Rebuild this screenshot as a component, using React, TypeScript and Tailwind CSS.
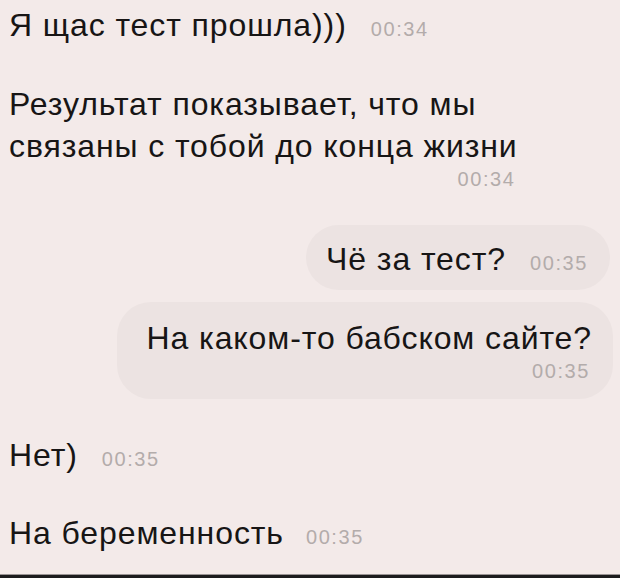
import React from "react";

const font = { fontFamily: '"Liberation Sans", Arial, sans-serif' };

function Time({ t, className = "" }: { t: string; className?: string }) {
  return (
    <span className={"text-[20px] leading-[24px] tracking-[1.6px] text-[#b3acab] " + className}>{t}</span>
  );
}

const big = "text-[32px] leading-[42px] tracking-[0.9px]";

export default function App() {
  return (
    <div style={font} className="w-[620px] h-[578px] bg-[#f3eae9] flex flex-col overflow-hidden text-[#171515]">
      <div className="flex-1 flex flex-col pl-[9px] pt-[4px]">
        <div className="flex items-baseline">
          <span className={big}>Я щас тест прошла)))</span>
          <Time t="00:34" className="ml-[24px]" />
        </div>

        <div className="mt-[37px] self-start flex flex-col">
          <div className={big}>
            Результат показывает, что мы
            <br />
            связаны с тобой до конца жизни
          </div>
          <div className="flex justify-end pr-[2px]">
            <Time t="00:34" />
          </div>
        </div>

        <div className="mt-[34px] self-end mr-[10px] flex items-baseline rounded-[34px] bg-[#ece3e2] pl-[20px] pr-[22px] pt-[13px] pb-[10px]">
          <span className={big}>Чё за тест?</span>
          <Time t="00:35" className="ml-[24px]" />
        </div>

        <div className="mt-[12px] self-end mr-[7px] flex flex-col rounded-[34px] bg-[#ece3e2] pl-[30px] pr-[21px] pt-[15px] pb-[16px]">
          <span className={big}>На каком-то бабском сайте?</span>
          <div className="flex justify-end pr-[2px]">
            <Time t="00:35" />
          </div>
        </div>

        <div className="mt-[35px] flex items-baseline">
          <span className={big}>Нет)</span>
          <Time t="00:35" className="ml-[24px]" />
        </div>

        <div className="mt-[36px] flex items-baseline">
          <span className={big}>На беременность</span>
          <Time t="00:35" className="ml-[22px]" />
        </div>
      </div>
      <div className="h-[1px] bg-[#9a9494]" />
      <div className="h-[3px] bg-[#1c1c1e]" />
    </div>
  );
}
